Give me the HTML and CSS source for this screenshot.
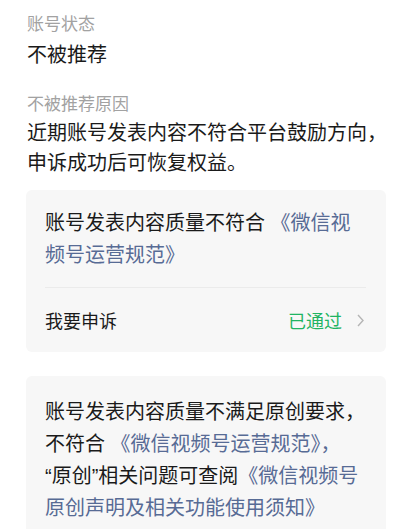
FILE: index.html
```html
<!DOCTYPE html>
<html lang="zh-CN">
<head>
    <meta name="viewport" content="width=device-width, initial-scale=1.0">
    <title>账号状态</title>
    <link rel="stylesheet" href="styles.css">
</head>
<body>
    <div class="section">
        <div class="label">账号状态</div>
        <div class="value">不被推荐</div>
    </div>
    <div class="section reason">
        <div class="label">不被推荐原因</div>
        <div class="value">近期账号发表内容不符合平台鼓励方向，申诉成功后可恢复权益。</div>
    </div>

    <div class="card">
        <div class="card-text">账号发表内容质量不符合 <a href="#" class="link">《微信视频号运营规范》</a></div>
        <div class="card-row">
            <span>我要申诉</span>
            <span class="status">已通过
                <svg class="chevron" width="7" height="13" viewBox="0 0 7 13">
                    <path d="M1 1 L6 6.5 L1 12" fill="none" stroke="#b5b5b5" stroke-width="1.4"/>
                </svg>
            </span>
        </div>
    </div>

    <div class="card card-long">
        <div class="card-text">账号发表内容质量不满足原创要求，不符合 <a href="#" class="link">《微信视频号运营规范》，</a>“原创”相关问题可查阅<a href="#" class="link">《微信视频号原创声明及相关功能使用须知》</a></div>
    </div>
</body>
</html>
```

FILE: styles.css
```css
body {
    margin: 0;
    padding: 0;
    background: #ffffff;
    color: #1a1a1a;
    font-family: "Liberation Sans", "Noto Sans CJK SC", sans-serif;
}
.section {
    padding: 13px 19px 0 27px;
}
.label {
    font-size: 17px;
    line-height: 24px;
    color: #a2a2a2;
}
.section .value {
    font-size: 20px;
    line-height: 28px;
    margin-top: 4px;
}
.reason {
    padding-top: 24px;
}
.reason .value {
    line-height: 30px;
    margin-top: 1px;
}
.card {
    margin: 12px 30px 0 26px;
    padding: 17px 20px 0 19px;
    background: #f7f7f7;
    border-radius: 6px;
}
.card-text {
    font-size: 20px;
    line-height: 32px;
    padding-bottom: 16px;
    border-bottom: 1px solid #ebebeb;
}
.link {
    color: #576b95;
    text-decoration: none;
}
.card-row {
    height: 64px;
    display: flex;
    align-items: center;
    justify-content: space-between;
    font-size: 18px;
}
.status {
    display: flex;
    align-items: center;
    color: #1fb463;
}
.chevron {
    margin-left: 15px;
    margin-right: 2px;
}
.card-long {
    margin-top: 24px;
    padding-top: 20px;
    padding-bottom: 20px;
}
.card-long .card-text {
    border-bottom: none;
    padding-bottom: 0;
}
```
